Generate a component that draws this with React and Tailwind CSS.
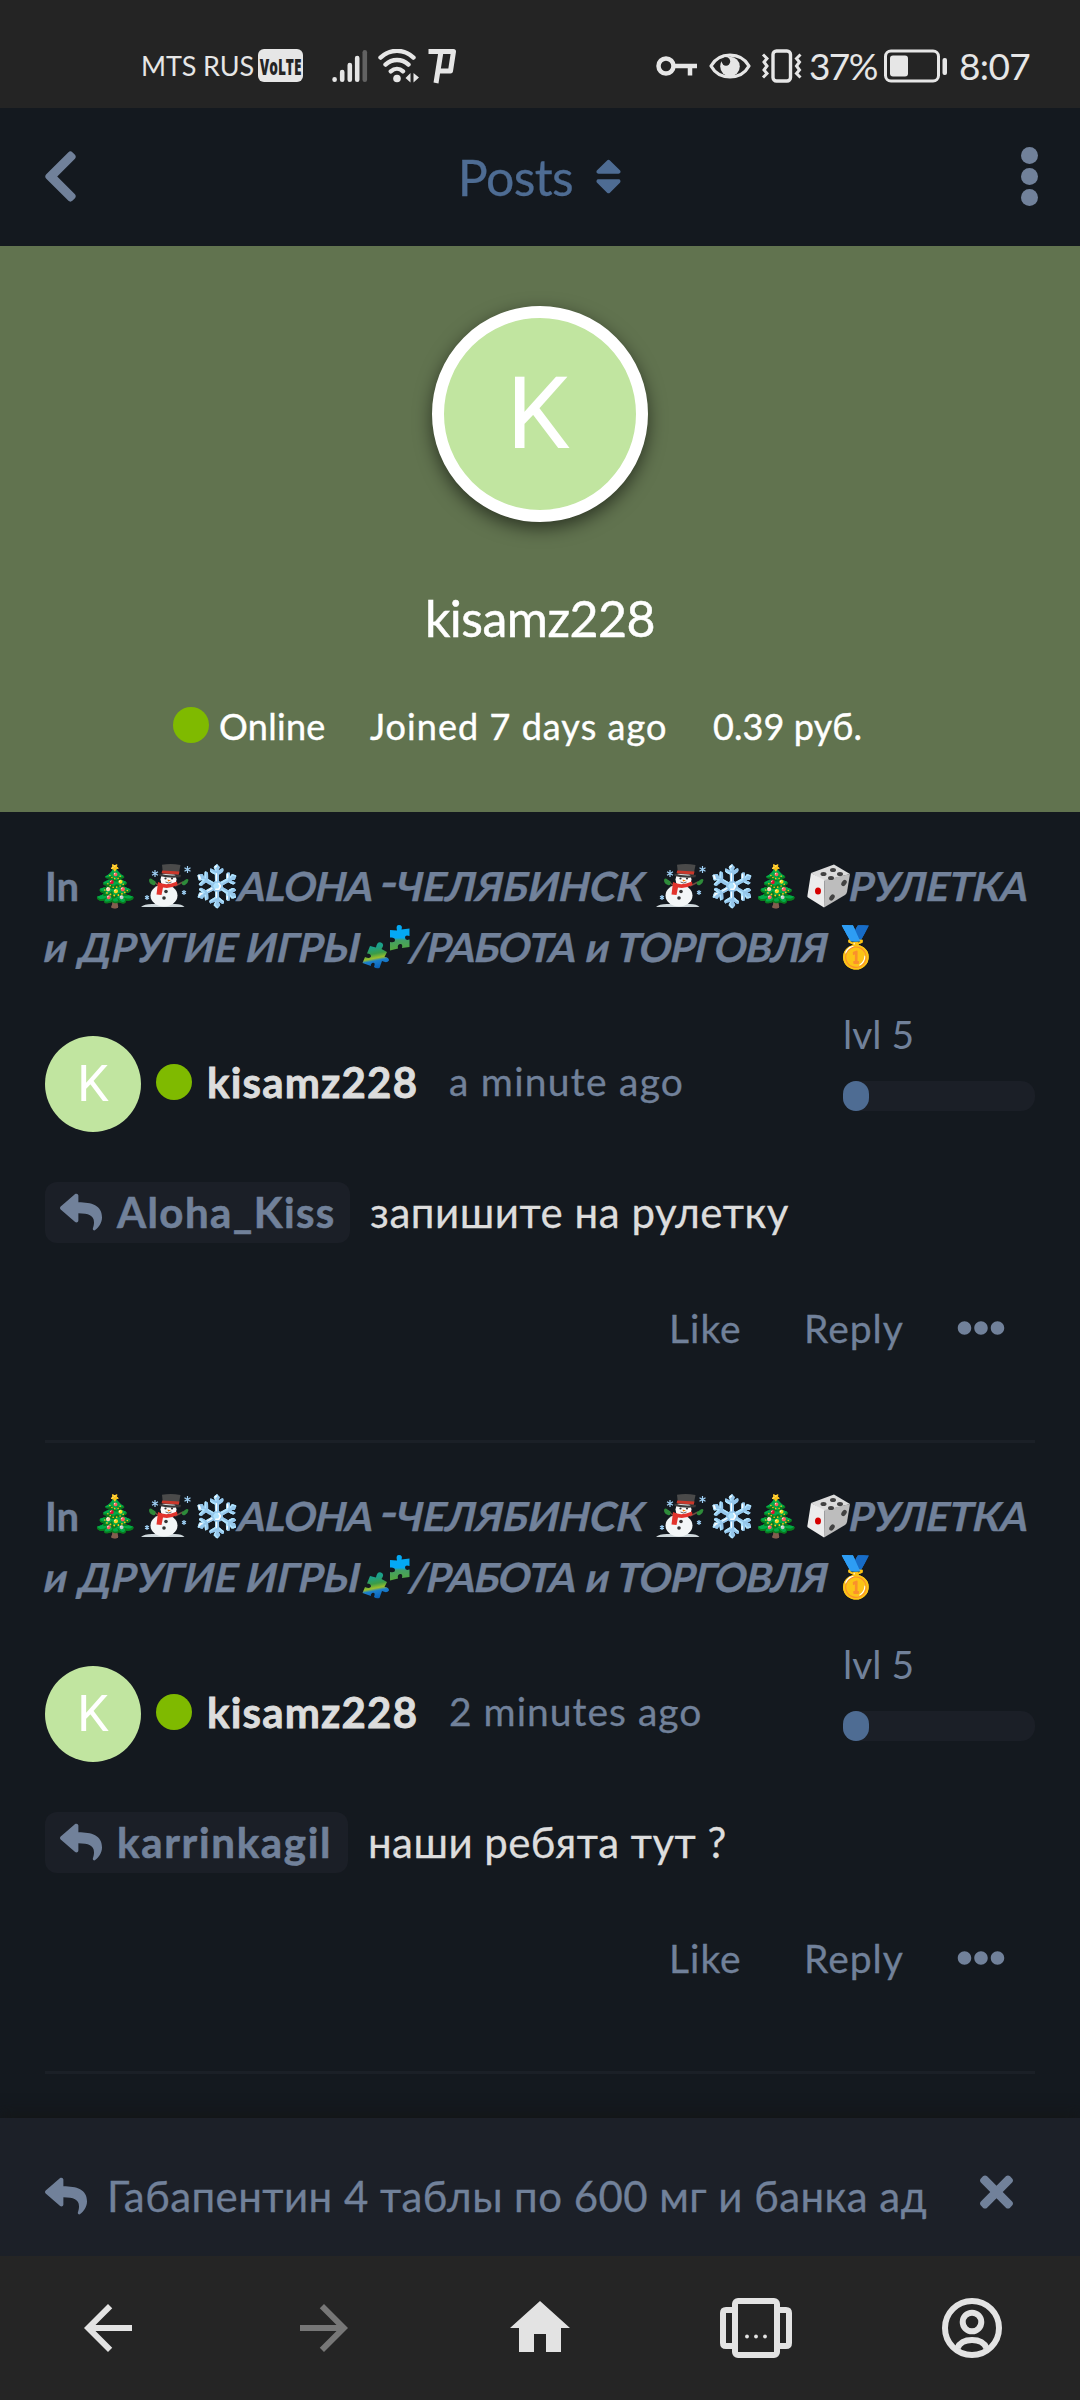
import React from "react";
import { FaReply, FaTimes, FaChevronLeft, FaSort, FaEllipsisH } from "react-icons/fa";
import { MdArrowBack, MdArrowForward, MdHome } from "react-icons/md";

function SignalIcon() {
  return (
    <svg className="ml-[29px] h-[34px] w-[36px]" viewBox="0 0 36 34" strokeWidth="4.6" strokeLinecap="round" stroke="#e6e6e6">
      <path d="M2.6 30.2v.6M10.2 23v7.8M17.8 16v14.8M25.2 9v21.8" />
      <path d="M32.8 3.2v27.6" stroke="#626262" />
    </svg>
  );
}

function WifiIcon() {
  return (
    <svg className="ml-[10px] h-[34px] w-[42px]" viewBox="0 0 42 34" fill="none" stroke="#e6e6e6" strokeWidth="4.400" strokeLinecap="round">
      <path d="M2.5 8.6C12-.4 26-.4 35.5 8.600M7.500 15.600C14 9.500 24 9.500 30.500 15.600M12.800 22.300C16.500 19 21.500 19 25 22.300" />
      <circle cx="19" cy="29.500" r="3.800" fill="#e6e6e6" stroke="none" />
      <path d="M32.500 24v9.500L27.500 29zM35.500 24v9.500L41 28.500z" fill="#e6e6e6" stroke="none" />
    </svg>
  );
}

function ParkingIcon() {
  return (
    <svg className="ml-[8px] h-[36px] w-[30px]" viewBox="0 0 30 36" fill="none" stroke="#e6e6e6" strokeWidth="5">
      <path d="M.5 3.500H25.500L22.500 23H10.500M13 3.500L8 35" strokeLinejoin="round" />
    </svg>
  );
}

function KeyIcon() {
  return (
    <svg className="h-[22px] w-[42px]" viewBox="0 0 42 22" fill="none" stroke="#e6e6e6">
      <circle cx="10" cy="11" r="7.500" strokeWidth="4.500" />
      <path d="M18 11H41M34 11v9.500" strokeWidth="4.500" />
    </svg>
  );
}

function EyeIcon() {
  return (
    <svg className="ml-[11px] h-[28px] w-[42px]" viewBox="0 0 42 28" fill="none" stroke="#e6e6e6">
      <path d="M2 14C10 -.5 32 -.5 40 14C32 28.500 10 28.500 2 14z" strokeWidth="3.200" strokeLinejoin="round" />
      <circle cx="21" cy="14.500" r="9.800" fill="#e6e6e6" stroke="none" />
      <circle cx="17" cy="9.500" r="4.200" fill="#242424" stroke="none" />
    </svg>
  );
}

function VibrateIcon() {
  return (
    <svg className="ml-[10px] h-[34px] w-[42px]" viewBox="0 0 42 34" fill="none" stroke="#e6e6e6" strokeWidth="3.400">
      <rect x="12" y="2" width="17.500" height="30" rx="3.500" />
      <path d="M2 5.500L6 9.500L3 13L6 17L3 21L6 24.500L2 28.500M39.500 5.500L35.500 9.500L38.500 13L35.500 17L38.500 21L35.500 24.500L39.500 28.500" strokeWidth="3" />
    </svg>
  );
}

function BatteryIcon() {
  return (
    <svg className="ml-[7px] h-[34px] w-[64px]" viewBox="0 0 64 34" fill="none">
      <rect x="1.500" y="2" width="53" height="30" rx="5.500" stroke="#e6e6e6" strokeWidth="3" />
      <rect x="6" y="6.500" width="18" height="21" rx="3" fill="#e6e6e6" />
      <rect x="58.500" y="9" width="4.500" height="17" rx="2" fill="#e6e6e6" />
    </svg>
  );
}

function StatusBar() {
  return (
    <div className="flex h-[108px] shrink-0 items-center justify-between bg-[#242424] pt-[23px] pl-[141px] pr-[50px] text-[#e6e6e6]">
      <div className="flex items-center">
        <span className="w-[117px] whitespace-nowrap pt-px text-[27px] tracking-[-0.100px]">MTS RUS</span>
        <span className="flex h-[33px] w-[45px] items-center justify-center rounded-[6px] bg-[#e6e6e6] text-[#242424]">
          <span className="scale-x-[0.62] font-['Open_Sans'] text-[22px] leading-none font-extrabold">VoLTE</span>
        </span>
        <SignalIcon />
        <WifiIcon />
        <ParkingIcon />
      </div>
      <div className="flex items-center">
        <KeyIcon />
        <EyeIcon />
        <VibrateIcon />
        <span className="ml-[6px] w-[68px] whitespace-nowrap pt-px text-[37px] tracking-[-1.600px]">37%</span>
        <BatteryIcon />
        <span className="ml-[11px] w-[71px] whitespace-nowrap pt-px text-[37px] tracking-[-0.600px]">8:07</span>
      </div>
    </div>
  );
}

function TopBar() {
  return (
    <div className="grid h-[138px] shrink-0 grid-cols-3 items-center pb-[1px] pl-[42px] pr-[42px]">
      <FaChevronLeft className="h-[59px] w-[37px] text-[#71819a]" />
      <div className="flex items-center justify-center text-[#4e6c93]">
        <span className="text-[50px] leading-[60px] tracking-[-0.600px] [-webkit-text-stroke:0.300px]">Posts</span>
        <FaSort className="ml-[22px] h-[43px] w-[27px]" />
      </div>
      <div className="flex flex-col items-center gap-[3.500px] justify-self-end">
        <i className="size-[17.500px] rounded-full bg-[#71819a]" />
        <i className="size-[17.500px] rounded-full bg-[#71819a]" />
        <i className="size-[17.500px] rounded-full bg-[#71819a]" />
      </div>
    </div>
  );
}

function Profile() {
  return (
    <div className="flex h-[566px] shrink-0 flex-col items-center bg-[#61734f] pt-[60px] text-white">
      <div className="flex size-[216px] items-center justify-center rounded-full border-[12px] border-white bg-[#c1e5a0] font-[Roboto] text-[100px] leading-none shadow-[0_6px_18px_rgba(0,0,0,0.55)]">
        <span className="-translate-x-[2px]">K</span>
      </div>
      <div className="mt-[66px] text-[50px] leading-[60px] tracking-[-0.500px] [-webkit-text-stroke:0.500px]">kisamz228</div>
      <div className="mt-[47px] flex h-[60px] w-full items-center pl-[173px] text-[36px] [-webkit-text-stroke:0.400px]">
        <i className="mr-[10px] size-[36px] rounded-full bg-[#7fba00]" />
        <span className="w-[151px] pt-px tracking-[0.300px]">Online</span>
        <span className="w-[343px] whitespace-nowrap pt-px tracking-[1.050px]">Joined 7 days ago</span>
        <span className="pt-px tracking-[0.100px]">0.39 руб.</span>
      </div>
    </div>
  );
}

function Snowman() {
  return (
    <svg className="h-[44px] w-[51px] shrink-0" viewBox="0 0 51 44">
      <path d="M0 43Q3 40 11 40H34Q41 40 43.500 43z" fill="#cfd8dc" />
      <ellipse cx="23" cy="31.500" rx="13.500" ry="11" fill="#f3f6f7" />
      <circle cx="27.500" cy="15.500" r="8" fill="#fafafa" />
      <path d="M18 22L12 17M34 22L42 18" stroke="#6d4c41" strokeWidth="1.500" />
      <path d="M8 16Q9 13.500 11.500 15.500L14.500 17.500Q15 22 12 21Q8 20 8 16zM47.500 16Q46.500 14 44 16L40.500 18.500Q41 22 44 21Q47 19.500 47.500 16z" fill="#2e8b3a" />
      <path d="M17 18Q25 22.500 36 17.500L36.500 21Q29 25 22 23.500L20.500 31L15.500 30.500z" fill="#e3342d" />
      <path d="M21 .8Q30 -.7 39.500 1L37.500 11L22 10z" fill="#4a4a4a" />
      <path d="M21.300 6.500L38.500 7.500L37.800 10.500L20.500 9.300z" fill="#c9382b" />
      <path d="M18.500 9.500Q28 12.500 40 10.800L39.500 13.300Q28 14.500 18.500 12z" fill="#3a3a3a" />
      <g fill="#333"><circle cx="24.500" cy="14.500" r="1.100" /><circle cx="31" cy="14.500" r="1.100" /><circle cx="25" cy="27.500" r="1.800" /><circle cx="23" cy="34" r="1.800" /></g>
      <path d="M26.500 15.500L30 16.500L27 17.500z" fill="#f57c00" />
      <path d="M24.500 18Q27.500 20 30.500 18" stroke="#444" strokeWidth=".8" fill="none" />
      <g stroke="#9fd0f5" strokeWidth="1.200">
        <path d="M14 6v7M11 7.700l6 3.600M17 7.700l-6 3.600M46.500 2v7M43.500 3.700l6 3.600M49.500 3.700l-6 3.600M43 26v5M41 27.300l4 2.400M45 27.300l-4 2.400M6 31v5M4 32.300l4 2.400M8 32.300l-4 2.400" />
      </g>
    </svg>
  );
}

function Dice() {
  return (
    <svg className="ml-[4px] mr-[-1px] h-[44px] w-[44px] shrink-0" viewBox="0 0 44 44">
      <path d="M27 .5L43 10L17 17L4 9z" fill="#dcdcdc" />
      <path d="M4 9L17.500 16L17 43.500L1 33.500Q0 33 .5 31z" fill="#ececec" />
      <path d="M43 10L17.500 16L17 43.500L38 31Q39.500 30 40 28z" fill="#bdbdbd" />
      <g fill="#424242">
        <ellipse cx="26" cy="6" rx="3" ry="2" /><ellipse cx="16.500" cy="10" rx="3" ry="2" />
        <ellipse cx="33" cy="10" rx="3" ry="2" /><ellipse cx="24" cy="14" rx="3" ry="2" />
        <ellipse cx="37" cy="19" rx="2.300" ry="3.400" transform="rotate(35 37 19)" />
        <ellipse cx="25" cy="33.500" rx="2.300" ry="3.400" transform="rotate(35 25 33.500)" />
      </g>
      <ellipse cx="11" cy="27" rx="3" ry="3.500" fill="#d50000" />
    </svg>
  );
}

function Puzzle() {
  return (
    <svg className="h-[44px] w-[48px] shrink-0" viewBox="0 0 48 44">
      <defs>
        <linearGradient id="pieceTop" x1="0" y1="0" x2="0" y2="1">
          <stop offset=".5" stopColor="#03a9f4" /><stop offset=".6" stopColor="#43a066" /><stop offset="1" stopColor="#55a83c" />
        </linearGradient>
        <linearGradient id="pieceLow" x1="0.3" y1="0" x2="0.5" y2="1">
          <stop offset=".2" stopColor="#1ba08a" /><stop offset=".45" stopColor="#3c9c46" /><stop offset=".62" stopColor="#9cc02c" /><stop offset=".72" stopColor="#1a7fcc" /><stop offset="1" stopColor="#0b62b8" />
        </linearGradient>
      </defs>
      <path d="M28 5L35 5.500Q33.500 0 37 0Q41 0 39.500 4.500L47.500 3.500V11Q43 9.500 43 12.500Q43 16 47.500 14.500V22L40 23Q41 18.500 38 19Q35 19.500 36 23.500L28 25.500V17Q33 18 33 15Q33 12 28 12.500z" fill="url(#pieceTop)" />
      <path d="M8 21L14 22.500Q15 16.500 19 17.500Q23 19 19.500 24L25 27L22.500 32Q27 32 27 35.500Q25 38.500 20 36L17.500 43Q14 44 12 42Q14 37 10 38Q8 40 9 41L.5 38L3 32Q8 34 9 31.500Q9 28.500 5 28.500z" fill="url(#pieceLow)" />
    </svg>
  );
}

function Title() {
  return (
    <div className="text-[40px] leading-[61px] font-bold whitespace-nowrap text-[#71819a] [-webkit-text-stroke:0.400px]">
      <div className="flex h-[61px] items-center">
        <span className="w-[45px] pt-px">In</span>
        <span className="w-[51px]">🎄</span>
        <Snowman />
        <span className="w-[47px]">❄️</span>
        <span className="w-[142px] -skew-x-12 pt-px tracking-[-0.800px]">ALOHA</span>
        <span className="w-[16px] origin-left -translate-y-[3px] scale-x-[1.200] -skew-x-12">-</span>
        <span className="w-[259px] -skew-x-12 pt-px">ЧЕЛЯБИНСК</span>
        <Snowman />
        <span className="w-[44px] tracking-[-6px]">❄️</span>
        <span className="w-[52px]">🎄</span>
        <Dice />
        <span className="-skew-x-12 pt-px tracking-[-0.200px]">РУЛЕТКА</span>
      </div>
      <div className="flex h-[61px] items-center">
        <span className="w-[35px] -skew-x-12 pt-px">и</span>
        <span className="w-[167px] -skew-x-12 pt-px">ДРУГИЕ</span>
        <span className="w-[115px] -skew-x-12 pt-px">ИГРЫ</span>
        <Puzzle />
        <span className="w-[177px] -skew-x-12 pt-px tracking-[-1.200px]">/РАБОТА</span>
        <span className="w-[31px] -skew-x-12 pt-px">и</span>
        <span className="w-[213px] -skew-x-12 pt-px tracking-[-0.800px]">ТОРГОВЛЯ</span>
        <span>🥇</span>
      </div>
    </div>
  );
}

function Post({ time, reply, chipClass, text, textClass, replyClass, timeClass, gapClass }) {
  return (
    <article className="mx-[45px] border-b-[3px] border-[#1b2027] pt-[42px]">
      <Title />
      <div className="mt-[37px] flex h-[118px] justify-between">
        <div className="mt-[22px] flex h-[96px] items-center">
          <div className="flex size-[96px] items-center justify-center rounded-full bg-[#c1e5a0] font-[Roboto] text-[50px] leading-none text-white">
            K
          </div>
          <div className="flex items-center pb-[5px]">
            <i className="ml-[15px] size-[36px] rounded-full bg-[#7fba00]" />
            <span className="ml-[15px] w-[242px] text-[42px] leading-[60px] font-bold tracking-[1.200px] text-[#dddddd] [-webkit-text-stroke:0.800px]">kisamz228</span>
            <span className={timeClass}>{time}</span>
          </div>
        </div>
        <div className="w-[192px] text-[39px] leading-[40px] text-[#71819a]">
          <div className="mb-[27px] h-[40px]">lvl 5</div>
          <div className="h-[30px] rounded-[14px] bg-[#1b1f27]">
            <div className="h-[30px] w-[26px] rounded-[13px] bg-[#4e6c93]" />
          </div>
        </div>
      </div>
      <div className="mt-[50px] flex h-[61px] items-center text-[42px] leading-[58px]">
        <div className={chipClass}>
          <FaReply className="mr-[15px] size-[42px] shrink-0" />
          <span className={replyClass}>{reply}</span>
        </div>
        <span className={textClass}>{text}</span>
      </div>
      <div className="mt-[55px] flex h-[60px] items-center justify-end pr-[30px] text-[39px] text-[#71819a] [-webkit-text-stroke:0.300px]">
        <span className="w-[135px] tracking-[1px]">Like</span>
        <span className="w-[153px] tracking-[1px]">Reply</span>
        <FaEllipsisH className="size-[48px]" />
      </div>
      <div className={gapClass} />
    </article>
  );
}

function ReplyBar() {
  return (
    <div className="flex h-[138px] shrink-0 items-center bg-[#1c2028] pt-[17px] pl-[45px] text-[42px] text-[#71819a] shadow-[0_-4px_14px_rgba(20,22,22,0.9)]">
      <FaReply className="size-[42px]" />
      <span className="ml-[20px] w-[873px] whitespace-nowrap pt-px tracking-[0.450px] [-webkit-text-stroke:0.300px]">Габапентин 4 таблы по 600 мг и банка ад</span>
      <FaTimes className="mb-[8px] h-[48px] w-[33px]" />
    </div>
  );
}

function TabsIcon() {
  return (
    <svg className="h-[60px] w-[72px]" viewBox="0 0 72 60" fill="none" stroke="#e3e3e3" strokeWidth="6">
      <rect x="15" y="3" width="42" height="54" rx="3" />
      <path d="M14 12H6Q3 12 3 15V45Q3 48 6 48H14M58 12H66Q69 12 69 15V45Q69 48 66 48H58" />
      <g fill="#e3e3e3" stroke="none">
        <circle cx="27" cy="38.500" r="1.900" /><circle cx="36" cy="38.500" r="1.900" /><circle cx="45" cy="38.500" r="1.900" />
      </g>
    </svg>
  );
}

function AccountIcon() {
  return (
    <svg className="size-[60px]" viewBox="0 0 60 60" fill="none" stroke="#e3e3e3" strokeWidth="6">
      <circle cx="30" cy="30" r="27" />
      <circle cx="30" cy="24" r="9.300" />
      <path d="M15.500 50C18 44 23 42 30 42S42 44 44.500 50" />
    </svg>
  );
}

function BottomNav() {
  return (
    <nav className="grid h-[144px] shrink-0 grid-cols-5 items-center justify-items-center bg-[#252525] text-[#e3e3e3]">
      <MdArrowBack className="size-[72px]" />
      <MdArrowForward className="size-[72px] text-[#777777]" />
      <MdHome className="size-[72px]" />
      <TabsIcon />
      <AccountIcon />
    </nav>
  );
}

export default function App() {
  return (
    <div className="flex h-[2400px] w-[1080px] flex-col overflow-hidden bg-[#14191f] font-[Lato,'Noto_Sans',sans-serif]">
      <StatusBar />
      <TopBar />
      <Profile />
      <main className="min-h-0 flex-1 overflow-hidden pt-px">
        <Post
          time="a minute ago"
          timeClass="text-[39px] tracking-[1.250px] text-[#71819a] [-webkit-text-stroke:0.300px]"
          reply="Aloha_Kiss"
          replyClass="font-bold tracking-[1.400px] [-webkit-text-stroke:0.600px]"
          chipClass="flex h-[61px] w-[305px] shrink-0 items-center rounded-[12px] bg-[#1b1f27] pb-[2px] pl-[15px] text-[#71819a]"
          text="запишите на рулетку"
          textClass="ml-[20px] pb-[2px] tracking-[0.550px] text-[#dddddd] [-webkit-text-stroke:0.300px]"
          gapClass="h-[82px]"
        />
        <Post
          time="2 minutes ago"
          timeClass="text-[39px] tracking-[1px] text-[#71819a] [-webkit-text-stroke:0.300px]"
          reply="karrinkagil"
          replyClass="font-bold tracking-[1.700px] [-webkit-text-stroke:0.600px]"
          chipClass="flex h-[61px] w-[303px] shrink-0 items-center rounded-[12px] bg-[#1b1f27] pb-[2px] pl-[15px] text-[#71819a]"
          text="наши ребята тут ?"
          textClass="ml-[20px] pb-[2px] tracking-[0.450px] text-[#dddddd] [-webkit-text-stroke:0.300px]"
          gapClass="h-[83px]"
        />
      </main>
      <ReplyBar />
      <BottomNav />
    </div>
  );
}
